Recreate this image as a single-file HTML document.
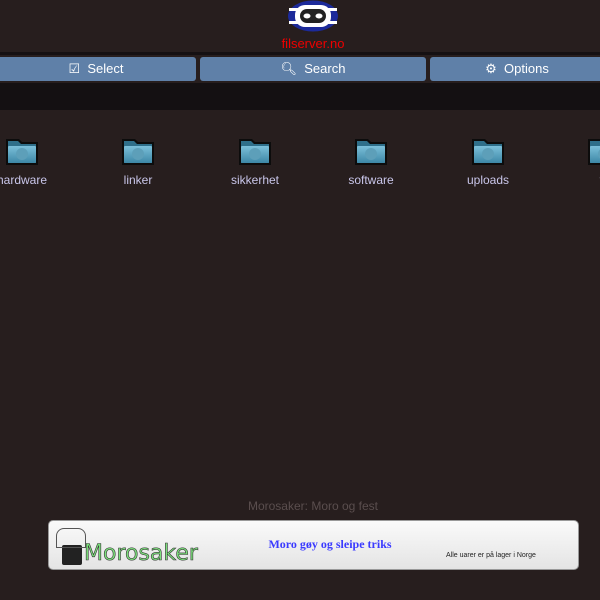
<!DOCTYPE html>
<html><head><style>
body{margin:0;width:600px;height:600px;background:#271e1e;font-family:"Liberation Sans",sans-serif;overflow:hidden;position:relative}
.abs{position:absolute}
.btn{position:absolute;top:57px;height:24px;background:#5f80a8;border-radius:3px;color:#fff;font-size:13px;line-height:24px;text-align:center}
.f{position:absolute;top:137px;width:34px;height:29px}
.lbl{position:absolute;top:173px;width:100px;text-align:center;color:#c9c6ea;font-size:12px}
</style></head><body>
<svg class="abs" style="left:286px;top:0" width="54" height="33" viewBox="0 0 54 33">
<ellipse cx="27" cy="16" rx="25" ry="15.5" fill="#1c2a9a"/>
<rect x="3" y="8" width="48" height="3" fill="#fff"/>
<rect x="3" y="21" width="48" height="3" fill="#fff"/>
<rect x="9" y="5" width="36" height="22" rx="10" fill="#fff"/>
<rect x="14" y="9" width="26" height="14" rx="7" fill="#222"/>
<ellipse cx="21" cy="16" rx="3.5" ry="2.5" fill="#fff"/>
<ellipse cx="33" cy="16" rx="3.5" ry="2.5" fill="#fff"/>
</svg>
<div class="abs" style="left:253px;top:36px;width:120px;text-align:center;color:#e00;font-size:13px">filserver.no</div>
<div class="abs" style="left:0;top:52px;width:600px;height:3px;background:#151012"></div>
<div class="btn" style="left:-4px;width:200px">☑&nbsp; Select</div>
<div class="btn" style="left:200px;width:226px">🔍︎&nbsp; Search</div>
<div class="btn" style="left:430px;width:174px">⚙&nbsp; Options</div>
<div class="abs" style="left:0;top:83px;width:600px;height:27px;background:#141012"></div>

<svg width="0" height="0" style="position:absolute"><defs>
<linearGradient id="g" x1="0" y1="0" x2="0" y2="1"><stop offset="0" stop-color="#7cc0da"/><stop offset="1" stop-color="#3d87a6"/></linearGradient>
<symbol id="fo" viewBox="0 0 34 29">
<path d="M1 2h13l3 3h16v23H1z" fill="#0c0c0c" />
<path d="M3 4h10l3 3h15v19H3z" fill="#2f6f8a"/>
<rect x="3" y="9" width="28" height="17" rx="1" fill="url(#g)"/>
<circle cx="17" cy="17" r="6" fill="#5d9fb9"/>
</symbol></defs></svg>
<svg class="f" style="left:5px"><use href="#fo"/></svg>
<svg class="f" style="left:121px"><use href="#fo"/></svg>
<svg class="f" style="left:238px"><use href="#fo"/></svg>
<svg class="f" style="left:354px"><use href="#fo"/></svg>
<svg class="f" style="left:471px"><use href="#fo"/></svg>
<svg class="f" style="left:587px"><use href="#fo"/></svg>
<div class="lbl" style="left:-28px">hardware</div>
<div class="lbl" style="left:88px">linker</div>
<div class="lbl" style="left:205px">sikkerhet</div>
<div class="lbl" style="left:321px">software</div>
<div class="lbl" style="left:438px">uploads</div>
<div class="lbl" style="left:554px">vi</div>

<div class="abs" style="left:200px;top:499px;width:226px;text-align:center;color:#5a4e4e;font-size:12px">Morosaker: Moro og fest</div>
<div class="abs" style="left:48px;top:520px;width:529px;height:48px;background:linear-gradient(#fafafa,#e4e4e4);border:1px solid #999;border-radius:5px"></div>
<div class="abs" style="left:62px;top:545px;width:20px;height:20px;background:#222;border-radius:2px"></div>
<div class="abs" style="left:56px;top:528px;width:28px;height:18px;border:1px solid #555;border-radius:8px 8px 0 0"></div>
<div class="abs" style="left:84px;top:541px;color:#7be07b;font-size:22px;font-family:'DejaVu Sans',sans-serif;-webkit-text-stroke:0.6px #333">Morosaker</div>
<div class="abs" style="left:230px;top:537px;width:200px;text-align:center;color:#3a3aff;font-weight:bold;font-size:12px;font-family:'Liberation Serif',serif">Moro gøy og sleipe triks</div>
<div class="abs" style="left:446px;top:552px;width:120px;color:#222;font-size:7px">Alle uarer er på lager i Norge</div>
</body></html>
